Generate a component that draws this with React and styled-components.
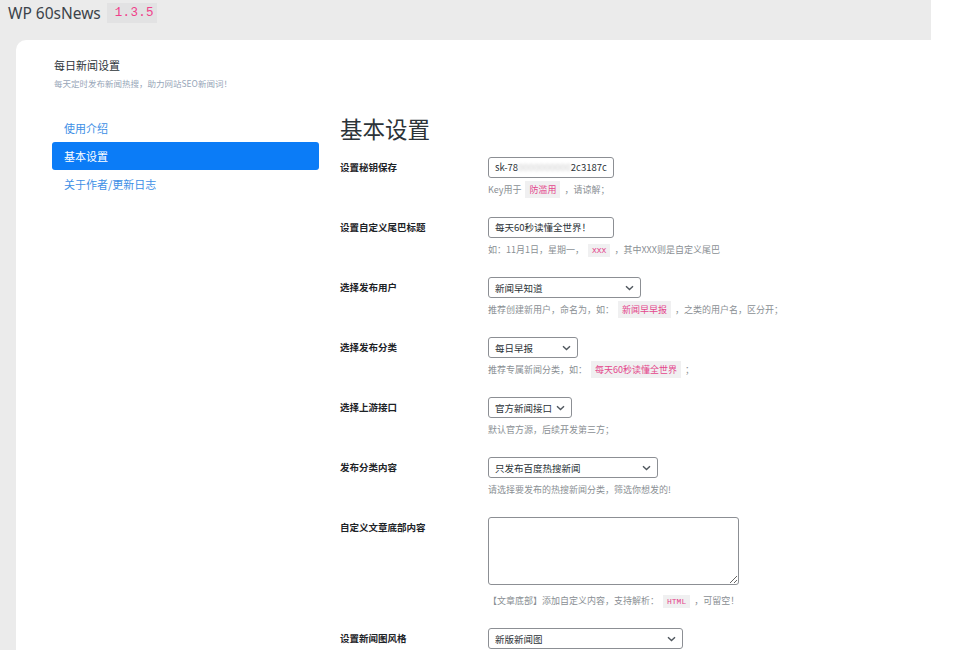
import React from 'react'
import styled, { createGlobalStyle } from 'styled-components'

const GlobalStyle = createGlobalStyle`
  html, body {
    margin: 0;
    padding: 0;
    background: #fff;
    overflow: hidden;
  }
  body {
    font-family: "Noto Sans", "Noto Sans CJK SC", sans-serif;
  }
`

const Page = styled.div`
  width: 931px;
  height: 650px;
  background: #ebebeb;
  display: flex;
  flex-direction: column;
  overflow: visible;
`

const TopBar = styled.div`
  height: 40px;
  flex-shrink: 0;
  display: flex;
  align-items: flex-start;
  padding: 3px 0 0 8px;
  box-sizing: border-box;
  gap: 6px;
`

const PluginName = styled.h1`
  margin: 0;
  font-family: "Noto Sans", sans-serif;
  font-size: 15.5px;
  font-weight: 400;
  color: #3c434a;
  line-height: 21px;
`

const Version = styled.code`
  font-family: "Liberation Mono", "DejaVu Sans Mono", monospace;
  font-size: 12.5px;
  color: #f0408a;
  background: #e2e2e3;
  padding: 0 3px 0 8px;
  height: 20px;
  line-height: 20px;
  letter-spacing: 0.3px;
`

const Card = styled.div`
  flex: 1 0 auto;
  margin-left: 16px;
  width: 940px;
  background: #fff;
  border-radius: 10px 0 0 0;
  padding: 17px 0 0 36px;
  box-sizing: border-box;
`

const CardHead = styled.div`
  padding-left: 2px;
  margin-bottom: 24px;
`

const CardTitle = styled.div`
  font-family: "Noto Sans CJK SC", sans-serif;
  font-size: 11px;
  line-height: 16px;
  color: #2c3338;
`

const CardDesc = styled.div`
  font-family: "Noto Sans CJK SC", sans-serif;
  font-size: 8.5px;
  line-height: 14px;
  margin-top: 3px;
  color: #97a6b8;
`

const Body = styled.div`
  display: flex;
  gap: 21px;
`

const Nav = styled.nav`
  width: 267px;
  display: flex;
  flex-direction: column;
`

const NavItem = styled.a`
  display: block;
  height: 28px;
  line-height: 28px;
  padding-left: 12px;
  border-radius: 3px;
  font-family: "Noto Sans CJK SC", sans-serif;
  font-size: 11px;
  text-decoration: none;
  color: ${p => (p.$active ? '#fff' : '#3d8fe6')};
  background: ${p => (p.$active ? '#0b7cf7' : 'transparent')};
`

const Main = styled.div`
  flex: 1;
`

const Heading = styled.h2`
  margin: 0 0 15px;
  font-family: "Noto Sans CJK SC", sans-serif;
  font-size: 22.5px;
  font-weight: 400;
  line-height: 28px;
  color: #2c3338;
`

const Row = styled.div`
  display: grid;
  grid-template-columns: 148px 1fr;
  padding-bottom: 21px;
`

const Label = styled.div`
  font-family: "Noto Sans CJK SC", sans-serif;
  font-size: 9.5px;
  font-weight: 700;
  line-height: 21px;
  color: #1d2327;
`

const Field = styled.div`
  display: flex;
  flex-direction: column;
  align-items: flex-start;
`

const TextInput = styled.div`
  width: ${p => p.$w}px;
  height: 21px;
  box-sizing: border-box;
  border: 1px solid #8c8f94;
  border-radius: 3px;
  padding: 0 6px;
  font-family: "Noto Sans CJK SC", sans-serif;
  font-size: 9.5px;
  line-height: 19px;
  color: #2c3338;
  white-space: nowrap;
  overflow: hidden;
`

const Blur = styled.span`
  color: #c9c9c9;
  filter: blur(1.4px);
`

const Select = styled.div`
  width: ${p => p.$w}px;
  height: 21px;
  box-sizing: border-box;
  border: 1px solid #8c8f94;
  border-radius: 3px;
  padding: 0 6px 0 6px;
  display: flex;
  align-items: center;
  justify-content: space-between;
  font-family: "Noto Sans CJK SC", sans-serif;
  font-size: 9.5px;
  color: #2c3338;
`

const TextArea = styled.textarea`
  width: 251px;
  height: 68px;
  box-sizing: border-box;
  border: 1px solid #8c8f94;
  border-radius: 3px;
  margin: 0;
  display: block;
`

const Help = styled.p`
  margin: ${p => (p.$wide ? 9 : 5)}px 0 0;
  font-family: "Noto Sans CJK SC", sans-serif;
  font-size: 9px;
  line-height: 13px;
  height: 13px;
  color: #8a8f94;
  white-space: nowrap;
`

const Code = styled.code`
  font-family: ${p => (p.$mono ? '"Liberation Mono", monospace' : '"Noto Sans CJK SC", sans-serif')};
  font-size: ${p => (p.$mono ? '8px' : '9px')};
  line-height: 1;
  color: #e4468c;
  background: #f0f0f1;
  padding: 2px 4px;
  margin: 0 4px;
`

const Chevron = () => (
  <svg width="9" height="6" viewBox="0 0 9 6">
    <path d="M1 1.2 L4.5 4.6 L8 1.2" fill="none" stroke="#50575e" strokeWidth="1.4" />
  </svg>
)

function SelectBox({ w, children }) {
  return (
    <Select $w={w}>
      <span>{children}</span>
      <Chevron />
    </Select>
  )
}

export default function App() {
  return (
    <>
      <GlobalStyle />
      <Page>
        <TopBar>
          <PluginName>WP 60sNews</PluginName>
          <Version>1.3.5</Version>
        </TopBar>
        <Card>
          <CardHead>
            <CardTitle>每日新闻设置</CardTitle>
            <CardDesc>每天定时发布新闻热搜，助力网站SEO新闻词！</CardDesc>
          </CardHead>
          <Body>
            <Nav>
              <NavItem href="#">使用介绍</NavItem>
              <NavItem href="#" $active>基本设置</NavItem>
              <NavItem href="#">关于作者/更新日志</NavItem>
            </Nav>
            <Main>
              <Heading>基本设置</Heading>

              <Row>
                <Label>设置秘钥保存</Label>
                <Field>
                  <TextInput $w={126}>sk-78<Blur>0000000000</Blur>2c3187c</TextInput>
                  <Help>Key用于<Code>防滥用</Code>，请谅解；</Help>
                </Field>
              </Row>

              <Row>
                <Label>设置自定义尾巴标题</Label>
                <Field>
                  <TextInput $w={126}>每天60秒读懂全世界！</TextInput>
                  <Help>如：11月1日，星期一，<Code $mono>XXX</Code>，其中XXX则是自定义尾巴</Help>
                </Field>
              </Row>

              <Row>
                <Label>选择发布用户</Label>
                <Field>
                  <SelectBox w={153}>新闻早知道</SelectBox>
                  <Help>推荐创建新用户，命名为，如：<Code>新闻早早报</Code>，之类的用户名，区分开；</Help>
                </Field>
              </Row>

              <Row>
                <Label>选择发布分类</Label>
                <Field>
                  <SelectBox w={90}>每日早报</SelectBox>
                  <Help>推荐专属新闻分类，如：<Code>每天60秒读懂全世界</Code>；</Help>
                </Field>
              </Row>

              <Row>
                <Label>选择上游接口</Label>
                <Field>
                  <SelectBox w={84}>官方新闻接口</SelectBox>
                  <Help>默认官方源，后续开发第三方；</Help>
                </Field>
              </Row>

              <Row>
                <Label>发布分类内容</Label>
                <Field>
                  <SelectBox w={170}>只发布百度热搜新闻</SelectBox>
                  <Help>请选择要发布的热搜新闻分类，筛选你想发的!</Help>
                </Field>
              </Row>

              <Row>
                <Label>自定义文章底部内容</Label>
                <Field>
                  <TextArea />
                  <Help $wide>【文章底部】添加自定义内容，支持解析：<Code $mono>HTML</Code>，可留空！</Help>
                </Field>
              </Row>

              <Row>
                <Label>设置新闻图风格</Label>
                <Field>
                  <SelectBox w={195}>新版新闻图</SelectBox>
                </Field>
              </Row>
            </Main>
          </Body>
        </Card>
      </Page>
    </>
  )
}
